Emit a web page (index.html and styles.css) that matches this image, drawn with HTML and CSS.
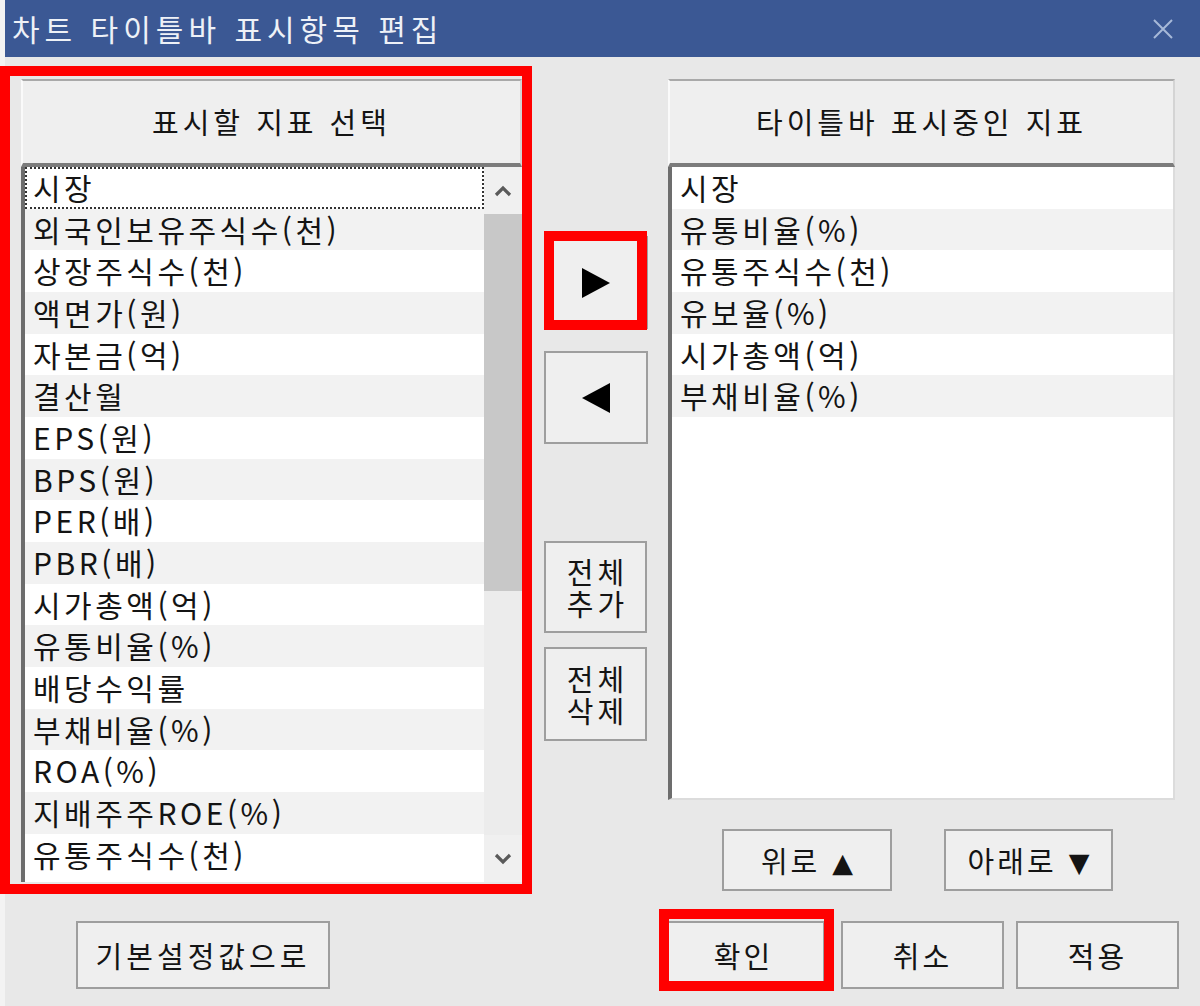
FILE: index.html
```html
<!DOCTYPE html>
<html lang="ko">
<head>
<meta charset="utf-8">
<title>차트 타이틀바 표시항목 편집</title>
<link rel="stylesheet" href="styles.css">
</head>
<body>
<div class="window">
  <div class="titlebar">
    <span class="title">차트 타이틀바 표시항목 편집</span>
    <svg class="close" width="22" height="22" viewBox="0 0 22 22"><path d="M2 2 L20 20 M20 2 L2 20" stroke="#a7b9d8" stroke-width="2" fill="none"/></svg>
  </div>
  <div class="body">
    <div class="main">
      <div class="panel panel-left annotated">
        <div class="panel-header">표시할 지표 선택</div>
        <div class="list list-left">
          <div class="rows">
            <div class="row focus">시장</div>
            <div class="row">외국인보유주식수(천)</div>
            <div class="row">상장주식수(천)</div>
            <div class="row">액면가(원)</div>
            <div class="row">자본금(억)</div>
            <div class="row">결산월</div>
            <div class="row">EPS(원)</div>
            <div class="row">BPS(원)</div>
            <div class="row">PER(배)</div>
            <div class="row">PBR(배)</div>
            <div class="row">시가총액(억)</div>
            <div class="row">유통비율(%)</div>
            <div class="row">배당수익률</div>
            <div class="row">부채비율(%)</div>
            <div class="row">ROA(%)</div>
            <div class="row">지배주주ROE(%)</div>
            <div class="row">유통주식수(천)</div>
          </div>
          <div class="scrollbar">
            <div class="sb-btn"><svg width="18" height="12" viewBox="0 0 18 12"><path d="M2 10 L9 3 L16 10" stroke="#5a5a5a" stroke-width="3.2" fill="none"/></svg></div>
            <div class="sb-thumb"></div>
            <div class="sb-track"></div>
            <div class="sb-btn"><svg width="18" height="12" viewBox="0 0 18 12"><path d="M2 2 L9 9 L16 2" stroke="#5a5a5a" stroke-width="3.2" fill="none"/></svg></div>
          </div>
        </div>
      </div>

      <div class="mid">
        <button class="btn btn-arrow btn-add annotated"><svg width="28" height="30" viewBox="0 0 28 30"><polygon points="0,0 28,15 0,30" fill="#000"/></svg></button>
        <button class="btn btn-arrow btn-remove"><svg width="28" height="30" viewBox="0 0 28 30"><polygon points="28,0 0,15 28,30" fill="#000"/></svg></button>
        <button class="btn btn-two btn-all-add">전체 추가</button>
        <button class="btn btn-two btn-all-del">전체 삭제</button>
      </div>

      <div class="right-col">
        <div class="panel panel-right">
          <div class="panel-header">타이틀바 표시중인 지표</div>
          <div class="list list-right">
            <div class="rows">
              <div class="row">시장</div>
              <div class="row">유통비율(%)</div>
              <div class="row">유통주식수(천)</div>
              <div class="row">유보율(%)</div>
              <div class="row">시가총액(억)</div>
              <div class="row">부채비율(%)</div>
            </div>
          </div>
        </div>
        <div class="updown">
          <button class="btn btn-up">위로<span class="tri">▲</span></button>
          <button class="btn btn-down">아래로<span class="tri">▼</span></button>
        </div>
      </div>
    </div>

    <div class="footer">
      <button class="btn btn-default">기본설정값으로</button>
      <button class="btn btn-foot btn-ok annotated">확인</button>
      <button class="btn btn-foot btn-cancel">취소</button>
      <button class="btn btn-foot btn-apply">적용</button>
    </div>
  </div>
</div>
</body>
</html>
```

FILE: styles.css
```css
* { box-sizing: border-box; }

html, body {
  margin: 0;
  padding: 0;
}

body {
  width: 1200px;
  height: 1006px;
  overflow: hidden;
  background: #f3f3f3;
  font-family: "Noto Sans CJK KR", "Noto Sans", sans-serif;
  color: #141414;
}

.window {
  margin-left: 5px;
  height: 1006px;
  background: #e8e8e8;
}

.titlebar {
  height: 57px;
  background: #3b5894;
  display: flex;
  align-items: center;
  justify-content: space-between;
  padding: 0 26px 0 7px;
}

.title {
  color: #eef1f7;
  font-size: 30px;
  letter-spacing: 5px;
  line-height: 1;
  margin-top: -2px;
}

.close { display: block; }

.main {
  display: flex;
  align-items: flex-start;
  padding: 22px 0 0 16px;
}

.panel { position: relative; }

.panel-left { width: 501px; }

.panel-header {
  height: 88px;
  background: #efefef;
  border-top: 2px solid #a9a9a9;
  border-left: 2px solid #fafafa;
  border-right: 2px solid #d4d4d4;
  border-bottom: 4px solid #7c7c7c;
  display: flex;
  align-items: center;
  justify-content: center;
  font-size: 29px;
  letter-spacing: 4px;
  padding-bottom: 2px;
}

.list {
  background: #fff;
  border-left: 4px solid #6d6d6d;
  display: flex;
}

.list-left { height: 715px; }

.list-right {
  height: 633px;
  border-right: 2px solid #dcdcdc;
  border-bottom: 2px solid #dcdcdc;
}

.rows { flex: 1; }

.row {
  height: 41.67px;
  line-height: 41px;
  padding-left: 8px;
  font-size: 30px;
  letter-spacing: 3.5px;
  white-space: nowrap;
}

.row:nth-child(even) { background: #f2f2f2; }

.row.focus {
  outline: 2px dotted #333;
  outline-offset: -2px;
}

.scrollbar {
  width: 38px;
  display: flex;
  flex-direction: column;
  background: #ebebeb;
}

.sb-btn {
  height: 47px;
  background: #f0f0f0;
  display: flex;
  align-items: center;
  justify-content: center;
}

.sb-btn svg { display: block; }

.sb-thumb {
  height: 377px;
  background: #c8c8c8;
}

.sb-track { flex: 1; background: #ececec; }

.mid {
  width: 103px;
  margin-left: 22px;
  display: flex;
  flex-direction: column;
}

.btn {
  font-family: "Noto Sans CJK KR", "Noto Sans", sans-serif;
  font-size: 29px;
  letter-spacing: 3px;
  color: #141414;
  background: #efefef;
  border: 2px solid #9e9e9e;
  border-radius: 0;
  padding: 0;
  margin: 0;
  display: flex;
  align-items: center;
  justify-content: center;
  position: relative;
}

.btn-arrow { height: 93px; width: 104px; }
.btn-arrow svg { display: block; }
.btn-add { margin-top: 157px; }
.btn-remove { margin-top: 22px; }

.btn-two {
  width: 103px;
  line-height: 32px;
  letter-spacing: 4px;
  padding: 0 0 0 4px;
  text-align: center;
  word-break: keep-all;
}
.btn-all-add { margin-top: 97px; height: 92px; }
.btn-all-del { margin-top: 14px; height: 94px; }

.right-col {
  width: 507px;
  margin-left: 21px;
}

.updown {
  display: flex;
  margin-top: 29px;
  padding-left: 54px;
}

.btn-up { width: 170px; height: 62px; }
.btn-down { width: 169px; height: 62px; margin-left: 52px; }

.tri {
  font-family: "DejaVu Sans", sans-serif;
  font-size: 27px;
  margin-left: 12px;
  position: relative;
  top: 2px;
  letter-spacing: 0;
}

.footer {
  display: flex;
  margin-top: 30px;
  padding-left: 71px;
}

.btn-default { width: 254px; height: 68px; letter-spacing: 4px; }
.btn-foot { width: 163px; height: 68px; }
.btn-ok { margin-left: 332px; }
.btn-cancel { margin-left: 16px; }
.btn-apply { margin-left: 12px; }

/* red annotation frames drawn over the content */
.annotated::after {
  content: "";
  position: absolute;
  border: 10px solid #ff0000;
  pointer-events: none;
}

.panel-left.annotated::after {
  top: -13px;
  left: -21px;
  right: -10px;
  bottom: -12px;
}

.btn-add.annotated::after {
  top: -7px;
  left: -2px;
  right: -1px;
  bottom: -3px;
}

.btn-ok.annotated::after {
  top: -14px;
  left: -5px;
  right: -11px;
  bottom: -4px;
}
```
